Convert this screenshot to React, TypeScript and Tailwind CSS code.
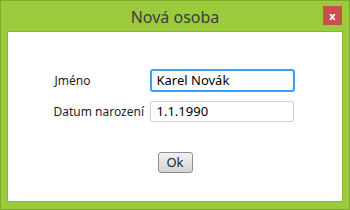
import React from 'react';

const App: React.FC = () => {
  return (
    <div
      className="w-[350px] h-[210px] bg-[#9bcb3c] border border-[#7eab2c] flex flex-col"
      style={{ fontFamily: '"Noto Sans", "Open Sans", sans-serif' }}
    >
      {/* Title bar */}
      <div className="h-[30px] shrink-0 flex items-center relative">
        <div className="flex-1 text-center text-[16px] text-[#3c3c3c] leading-none pt-[1px]">Nová osoba</div>
        <button className="absolute right-[7px] top-[5px] w-[19px] h-[19px] bg-[#c75050] flex items-center justify-center text-white text-[11px] font-bold leading-none">
          x
        </button>
      </div>

      {/* Content */}
      <div className="mx-[6px] mb-[7px] flex-1 bg-white border border-[#86b53a] flex flex-col items-center">
        <div className="mt-[37px] grid grid-cols-[96px_145px] gap-y-[9px] items-center text-[12px] text-[#1e1e1e] ml-[-2px]">
          <span className="pl-[1px]">Jméno</span>
          <div className="h-[23px] border-2 border-[#3fa0f0] rounded-[3px] flex items-center px-[5px] text-[13px] text-black">
            Karel Novák
          </div>
          <span>Datum narození</span>
          <div className="h-[21px] w-[144px] border border-[#d0d0d0] rounded-[2px] flex items-center px-[6px] text-[13px] text-black">
            1.1.1990
          </div>
        </div>
        <button className="mt-[30px] w-[35px] h-[21px] rounded-[3px] border border-[#8e8e8e] bg-gradient-to-b from-[#f2f2f2] to-[#d4d4d4] text-[13px] text-[#222] leading-none flex items-center justify-center">
          Ok
        </button>
      </div>
    </div>
  );
};

export default App;
